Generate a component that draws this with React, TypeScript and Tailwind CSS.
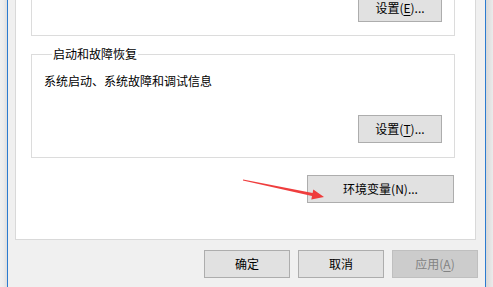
const Btn = ({ children, className = '', disabled = false }: { children: React.ReactNode; className?: string; disabled?: boolean }) => (
  <button
    disabled={disabled}
    className={`h-[28px] flex items-center justify-center border text-[12px] leading-[16px] ${
      disabled ? 'bg-[#cccccc] border-[#bfbfbf] text-[#838383]' : 'bg-[#e1e1e1] border-[#adadad] text-black'
    } ${className}`}
  >
    {children}
  </button>
);

export default function App() {
  return (
    <div className="relative w-[493px] h-[287px] overflow-hidden flex bg-[#f0f0f0] font-['Noto_Sans_CJK_SC',sans-serif] text-[12px] text-black">
      {/* window edges */}
      <div className="w-[7px] h-full bg-gradient-to-r from-[#f0f0f0] via-[#ececec] to-[#dedede]" />
      <div className="w-px h-full bg-[#2b7bd0]" />

      <div className="flex-1 flex flex-col">
        {/* tab page */}
        <div className="h-[240px] ml-[7px] mr-[9px] bg-white border-x border-b border-[#d9d9d9] flex flex-col">
          <div className="h-[36px] ml-[15px] mr-[20px] border-x border-b border-[#dcdcdc] flex flex-col justify-end items-end pr-[12px] pb-[13px]">
            <Btn className="w-[84px] shrink-0">
              设置(<span className="underline underline-offset-2">E</span>)...
            </Btn>
          </div>

          <fieldset className="mt-[10px] ml-[15px] mr-[20px] border border-[#dcdcdc] flex flex-col pl-[12px] pr-[12px] pb-[14px]">
            <legend className="ml-[8px] px-[1px] leading-[16px]">启动和故障恢复</legend>
            <p className="mt-[11px] leading-[16px]">系统启动、系统故障和调试信息</p>
            <div className="mt-[26px] flex justify-end">
              <Btn className="w-[84px]">
                设置(<span className="underline underline-offset-2">T</span>)...
              </Btn>
            </div>
          </fieldset>

          <div className="mt-[17px] mr-[21px] flex justify-end">
            <Btn className="w-[147px]">环境变量(N)...</Btn>
          </div>
        </div>

        {/* dialog buttons */}
        <div className="mt-[10px] pr-[7px] flex justify-end gap-[8px]">
          <Btn className="w-[86px]">确定</Btn>
          <Btn className="w-[86px]">取消</Btn>
          <Btn className="w-[86px]" disabled>
            应用(<span className="underline underline-offset-2">A</span>)
          </Btn>
        </div>
      </div>

      <div className="w-px h-full bg-[#2b7bd0]" />
      <div className="w-[7px] h-full bg-gradient-to-r from-[#d8d8d8] to-[#ebebeb]" />

      {/* annotation arrow */}
      <svg className="absolute left-0 top-0 pointer-events-none" width="493" height="287">
        <polygon
          points="243.1,179.5 312.6,193.0 313.3,189.6 324,197 311.3,199.4 312.0,196.0 242.9,180.5"
          fill="#ef3d3d"
        />
      </svg>
    </div>
  );
}
